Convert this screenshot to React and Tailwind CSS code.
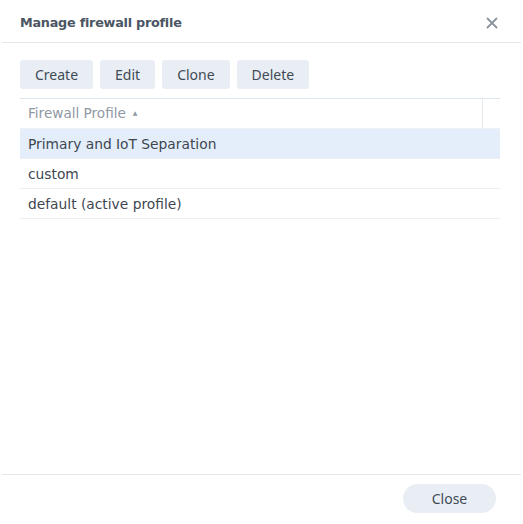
const ROWS = [
  { id: 1, name: "Primary and IoT Separation", selected: true },
  { id: 2, name: "custom" },
  { id: 3, name: "default (active profile)" },
];

const ACTIONS = ["Create", "Edit", "Clone", "Delete"];

export default function App() {
  return (
    <div className="w-[523px] h-[524px] bg-white flex flex-col font-['Noto_Sans',sans-serif]">
      {/* Header */}
      <div className="h-[43px] mx-[2px] border-b border-[#e3e8ef] flex items-center justify-between pl-[18px] pr-[23px] pt-[3px]">
        <h1 className="text-[12.8px] font-bold text-[#4b5563] font-['DejaVu_Sans',sans-serif] tracking-[-0.25px]">
          Manage firewall profile
        </h1>
        <svg width="12" height="12" viewBox="0 0 12 12" className="text-[#8a939e]">
          <path d="M1.5 1.5 L10.5 10.5 M10.5 1.5 L1.5 10.5" stroke="currentColor" strokeWidth="1.8" strokeLinecap="round" />
        </svg>
      </div>

      {/* Body */}
      <div className="flex-1 px-5 pt-[17px]">
        <div className="flex gap-[7px]">
          {ACTIONS.map((a) => (
            <button
              key={a}
              className="h-[29px] px-[15px] rounded-[3px] bg-[#e9eef5] text-[14px] text-[#414b57]"
            >
              {a}
            </button>
          ))}
        </div>

        <div className="mt-[9px] w-[480px] border-t border-[#dce6f0]">
          <div className="h-[30px] flex border-b border-[#eef1f5]">
            <div className="flex-1 flex items-center pl-2 text-[13.6px] text-[#8f98a3] font-['DejaVu_Sans',sans-serif] border-r border-[#e6ebf1]">
              Firewall Profile
              <span className="ml-[7px] text-[6px] text-[#8f98a3] -mt-[2px]">▲</span>
            </div>
            <div className="w-[17px]" />
          </div>
          {ROWS.map((r) => (
            <div
              key={r.id}
              className={
                "h-[30px] flex items-center pl-2 pt-[1px] text-[13.8px] text-[#3e4650] font-['DejaVu_Sans',sans-serif] border-b border-[#eceff3] " +
                (r.selected ? "bg-[#e3eefa]" : "")
              }
            >
              {r.name}
            </div>
          ))}
        </div>
      </div>

      {/* Footer */}
      <div className="h-[50px] mx-[2px] border-t border-[#e3e8ef] flex items-center justify-end pr-[25px] pb-[2px]">
        <button className="w-[93px] h-[29px] rounded-full bg-[#e9eef5] text-[14px] text-[#414b57]">
          Close
        </button>
      </div>
    </div>
  );
}
